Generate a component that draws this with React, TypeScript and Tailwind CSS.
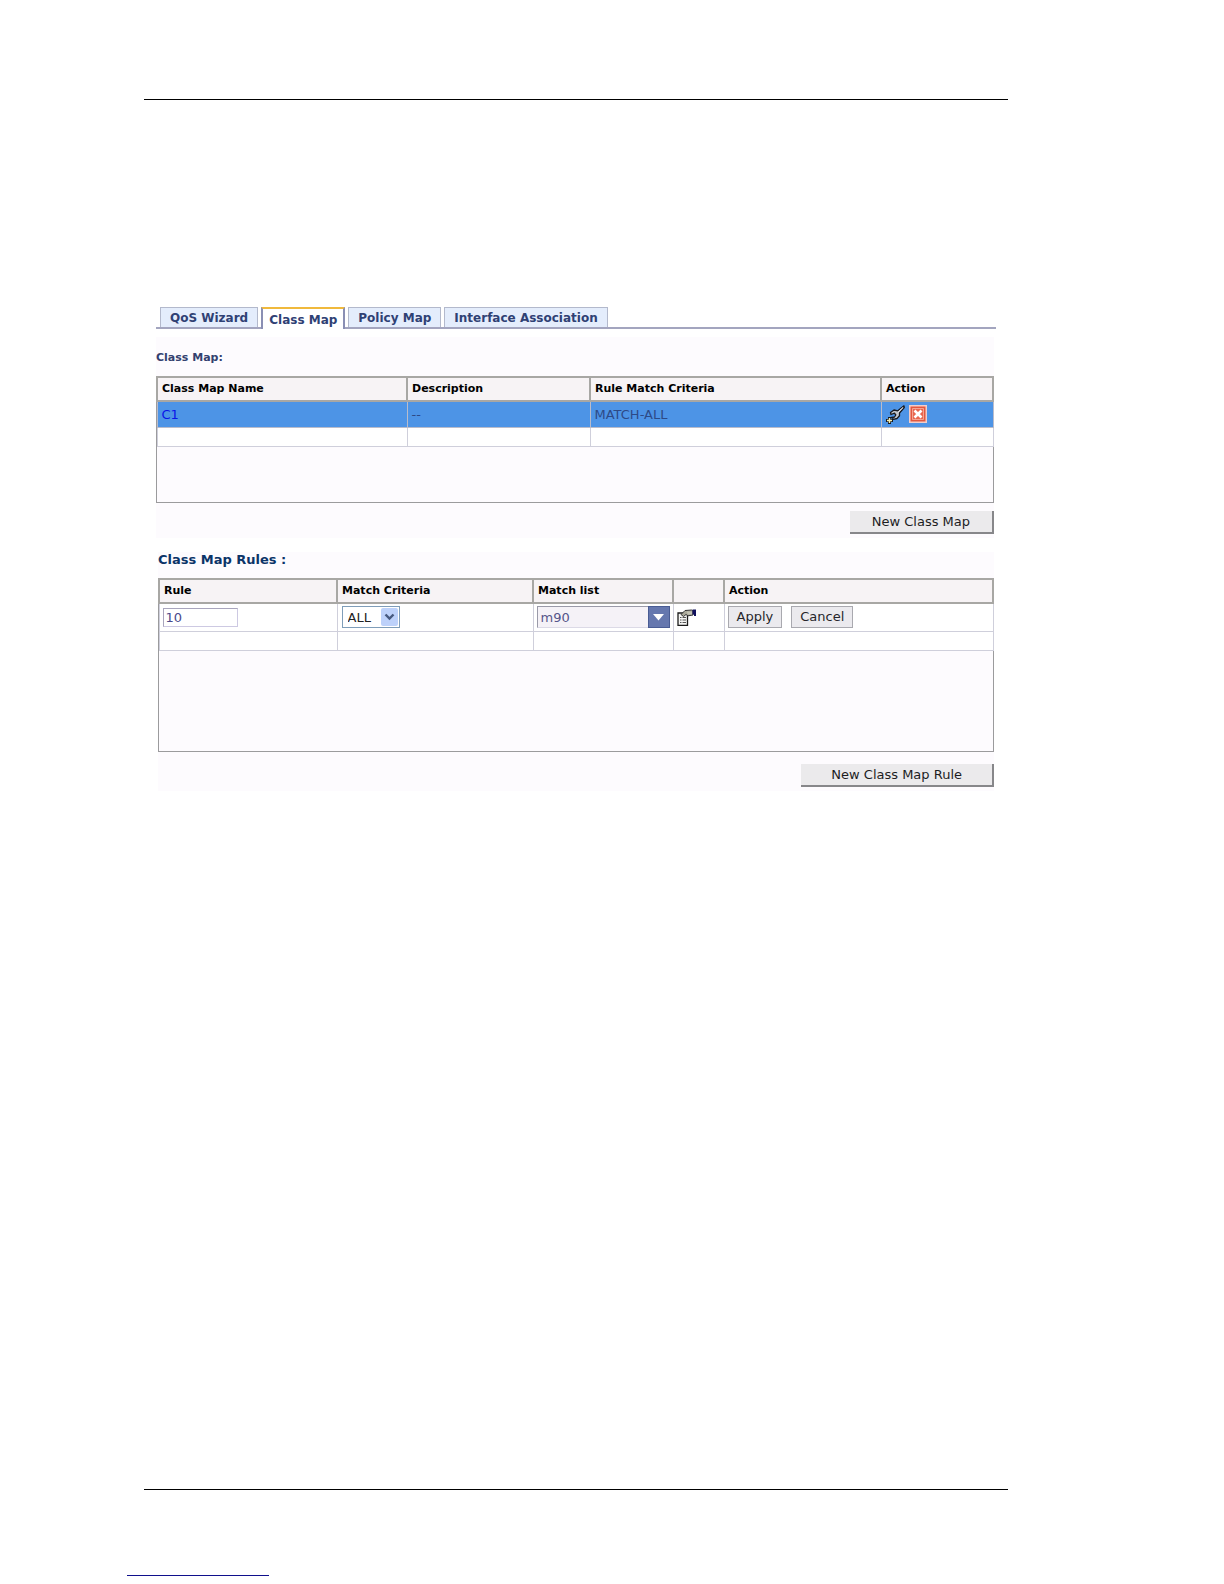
import type { ReactNode } from "react";

const tabs = ["QoS Wizard", "Class Map", "Policy Map", "Interface Association"];

function Tab({ label, active }: { label: string; active: boolean }) {
  return (
    <button
      type="button"
      role="tab"
      aria-selected={active}
      className={
        active
          ? "relative -mb-0.5 h-[22px] border-x-2 border-t-2 border-x-[#8a8fb4] border-t-[#f0b93c] bg-white px-1.5 pt-0.5 text-xs leading-4 font-bold text-[#2f4174]"
          : "h-5 border border-b-0 border-[#b3b9cc] bg-[#e4edfc] px-[9px] text-xs leading-5 font-bold text-[#2f4174]"
      }
    >
      {label}
    </button>
  );
}

function HeaderCell({ children }: { children?: ReactNode }) {
  return (
    <th
      scope="col"
      className="h-6 border-2 border-[#a8a7a4] bg-[#f7f3f5] px-1 text-left text-[11px] leading-4 font-bold text-black"
    >
      {children}
    </th>
  );
}

function EmptyRow({ columns }: { columns: number }) {
  return (
    <tr>
      {Array.from({ length: columns }, (_, i) => (
        <td key={i} className="h-[19px] border border-[#cfcfdb] bg-white" />
      ))}
    </tr>
  );
}

function WrenchIcon() {
  return (
    <svg width="19" height="19" viewBox="0 0 19 19" aria-hidden="true">
      <path d="M18 .8 11.800 5.800 8 5 4.500 7.500 5 9.500 8.500 8.200 9.800 10 8.500 12 5.500 12.500 7.500 14.300 11 13.500 13.500 10.800 13.500 8 18.300 2.500Z" fill="#c3c7cd" stroke="#17191f" strokeWidth="1.300" strokeLinejoin="round" />
      <path d="M12.300 7 17 2.500" stroke="#f4f4f4" strokeWidth="1" />
      <path d="M3.500 12v7M0 15.500h7" stroke="#17191f" strokeWidth="3" />
      <path d="M3.500 13v5M1 15.500h5" stroke="#f7efb0" strokeWidth="1.400" />
    </svg>
  );
}

function DeleteIcon() {
  return (
    <svg width="18" height="18" viewBox="0 0 18 18" aria-hidden="true">
      <path d="M0 0h18v18H0z" fill="#f3cdc8" />
      <path d="M1.500 1.500h15v15h-15z" fill="#e2573f" />
      <path d="M3.500 3.500h11v11h-11z" fill="#e9674f" stroke="#f6b5a5" strokeWidth="0.800" />
      <path d="m5.500 5.500 7 7m0-7-7 7" stroke="#fff" strokeWidth="2.600" />
    </svg>
  );
}

function PropertiesIcon() {
  return (
    <svg width="19" height="17" viewBox="0 0 19 17" aria-hidden="true">
      <path d="M1 4h9.500v12.300H1z" fill="#f6f6f4" stroke="#1c1c1c" strokeWidth="1.300" />
      <path d="M3 8.500h1.500M3 11h1.500M3 13.500h1.500M5.500 8.500H9M5.500 11H9M5.500 13.500H9" stroke="#555" strokeWidth="1" />
      <path d="M4 5.500 8 1.500 14.500 1 16 2v4l-5 .8L9 5.500 6.500 7.500Z" fill="#aaa99a" stroke="#333" strokeWidth="1" strokeLinejoin="round" />
      <path d="M10 3.200h5M10.500 4.800H15" stroke="#d8d8c8" strokeWidth="0.800" />
      <path d="M15.500 0.500H19v6.500h-2V5.500h-1.500z" fill="#10105c" />
    </svg>
  );
}

function RaisedButton({ children }: { children: ReactNode }) {
  return (
    <button
      type="button"
      className="h-[23px] border-r-2 border-b-2 border-[#87878a] bg-[#ebeaec] px-[22px] text-[13px] leading-5 text-[#1d1d1f]"
    >
      {children}
    </button>
  );
}

function WideRaisedButton({ children }: { children: ReactNode }) {
  return (
    <button
      type="button"
      className="h-[23px] border-r-2 border-b-2 border-[#87878a] bg-[#ebeaec] px-[30px] text-[13px] leading-5 text-[#1d1d1f]"
    >
      {children}
    </button>
  );
}

function SmallButton({ children }: { children: ReactNode }) {
  return (
    <button
      type="button"
      className="h-[22px] border border-[#a9a9af] bg-[#ebeaee] px-2 text-[13px] leading-5 text-[#26262a]"
    >
      {children}
    </button>
  );
}

export default function App() {
  return (
    <div
      className="flex min-h-screen flex-col bg-white"
      style={{ fontFamily: '"DejaVu Sans", Verdana, sans-serif' }}
    >
      <main className="flex flex-col pt-[99px] pr-[216px] pl-36">
        <hr className="border-t border-black" />

        <div className="mt-[207px] mr-3 ml-3">
          <div role="tablist" className="flex items-end gap-[3px] border-b-2 border-[#a3a5bf] pl-1">
            {tabs.map((label) => (
              <Tab key={label} label={label} active={label === "Class Map"} />
            ))}
          </div>
        </div>

        <section className="mt-2 mr-[14px] ml-3 bg-[#fdfbfe]">
          <h2 className="pt-[13px] text-[11px] leading-4 font-bold text-[#33416f]">Class Map:</h2>
          <div className="mt-[10px] h-[127px] border border-[#9b9b9d]">
            <table className="-mt-px -ml-px w-[calc(100%+2px)] table-fixed border-collapse">
              <colgroup>
                <col />
                <col className="w-[183px]" />
                <col className="w-[291px]" />
                <col className="w-[112px]" />
              </colgroup>
              <thead>
                <tr>
                  <HeaderCell>Class Map Name</HeaderCell>
                  <HeaderCell>Description</HeaderCell>
                  <HeaderCell>Rule Match Criteria</HeaderCell>
                  <HeaderCell>Action</HeaderCell>
                </tr>
              </thead>
              <tbody className="text-[13px] text-[#2d4a86]">
                <tr className="h-[26px] bg-[#4d94e6]">
                  <td className="border border-[#b9bccb] px-1">
                    <a href="#c1" className="text-[#0a14e8]">C1</a>
                  </td>
                  <td className="border border-[#b9bccb] px-1">--</td>
                  <td className="border border-[#b9bccb] px-1">MATCH-ALL</td>
                  <td className="border border-[#b9bccb] px-1">
                    <div className="flex items-center gap-1">
                      <button type="button" aria-label="Edit"><WrenchIcon /></button>
                      <button type="button" aria-label="Delete"><DeleteIcon /></button>
                    </div>
                  </td>
                </tr>
                <EmptyRow columns={4} />
              </tbody>
            </table>
          </div>
          <div className="flex justify-end pt-2 pb-1">
            <RaisedButton>New Class Map</RaisedButton>
          </div>
        </section>

        <section className="mt-[14px] mr-[14px] ml-[14px] bg-[#fdfbfe]">
          <h2 className="text-[13px] leading-4 font-bold text-[#0b3468]">Class Map Rules :</h2>
          <div className="mt-[10px] h-[174px] border border-[#9b9b9d]">
            <table className="-mt-px -ml-px w-[calc(100%+2px)] table-fixed border-collapse">
              <colgroup>
                <col />
                <col className="w-[196px]" />
                <col className="w-[140px]" />
                <col className="w-[51px]" />
                <col className="w-[269px]" />
              </colgroup>
              <thead>
                <tr>
                  <HeaderCell>Rule</HeaderCell>
                  <HeaderCell>Match Criteria</HeaderCell>
                  <HeaderCell>Match list</HeaderCell>
                  <HeaderCell />
                  <HeaderCell>Action</HeaderCell>
                </tr>
              </thead>
              <tbody className="text-[13px]">
                <tr className="h-7 bg-white">
                  <td className="border border-[#cfcfdb] px-[3px]">
                    <input
                      aria-label="Rule"
                      defaultValue="10"
                      className="block h-[19px] w-[75px] border border-[#cdc9e2] border-t-[#a9a5bd] border-l-[#a9a5bd] bg-white px-0.5 text-[13px] text-[#4b4a8c]"
                    />
                  </td>
                  <td className="border border-[#cfcfdb] px-1">
                    <div className="relative w-[58px]">
                      <select
                        aria-label="Match Criteria"
                        className="block h-[22px] w-full appearance-none border border-[#7f9db9] bg-white pl-[5px] text-[13px] text-[#222]"
                      >
                        <option>ALL</option>
                        <option>ANY</option>
                      </select>
                      <span className="pointer-events-none absolute top-0.5 right-0.5 flex h-[18px] w-[17px] items-center justify-center rounded-xs bg-[#bdd1fa]">
                        <svg width="11" height="8" viewBox="0 0 11 8" aria-hidden="true">
                          <path d="m1.500 1.500 4 4 4-4" fill="none" stroke="#46597f" strokeWidth="2.400" />
                        </svg>
                      </span>
                    </div>
                  </td>
                  <td className="border border-[#cfcfdb] px-[3px]">
                    <div className="relative w-[133px]">
                      <select
                        aria-label="Match list"
                        className="block h-[22px] w-full appearance-none border border-[#dcdae6] border-t-[#9a9aa8] border-l-[#9a9aa8] bg-[#f5f2f7] pl-[3px] text-[13px] text-[#55558a]"
                      >
                        <option>m90</option>
                      </select>
                      <span className="pointer-events-none absolute top-0 right-0 flex h-[22px] w-[22px] items-center justify-center border border-[#495c94] bg-[#6577ae]">
                        <svg width="11" height="7" viewBox="0 0 11 7" aria-hidden="true">
                          <path d="M0 0h11L5.500 6.500z" fill="#fff" />
                        </svg>
                      </span>
                    </div>
                  </td>
                  <td className="border border-[#cfcfdb] px-[3px]">
                    <button type="button" aria-label="Edit match list" className="block">
                      <PropertiesIcon />
                    </button>
                  </td>
                  <td className="border border-[#cfcfdb] px-[3px]">
                    <div className="flex gap-[9px]">
                      <SmallButton>Apply</SmallButton>
                      <SmallButton>Cancel</SmallButton>
                    </div>
                  </td>
                </tr>
                <EmptyRow columns={5} />
              </tbody>
            </table>
          </div>
          <div className="flex justify-end pt-3 pb-1">
            <WideRaisedButton>New Class Map Rule</WideRaisedButton>
          </div>
        </section>
      </main>

      <footer className="mt-auto pb-2">
        <hr className="mr-[216px] ml-36 border-t border-black" />
        <hr className="mt-[85px] ml-[127px] w-[142px] border-t border-[#10108c]" />
      </footer>
    </div>
  );
}
